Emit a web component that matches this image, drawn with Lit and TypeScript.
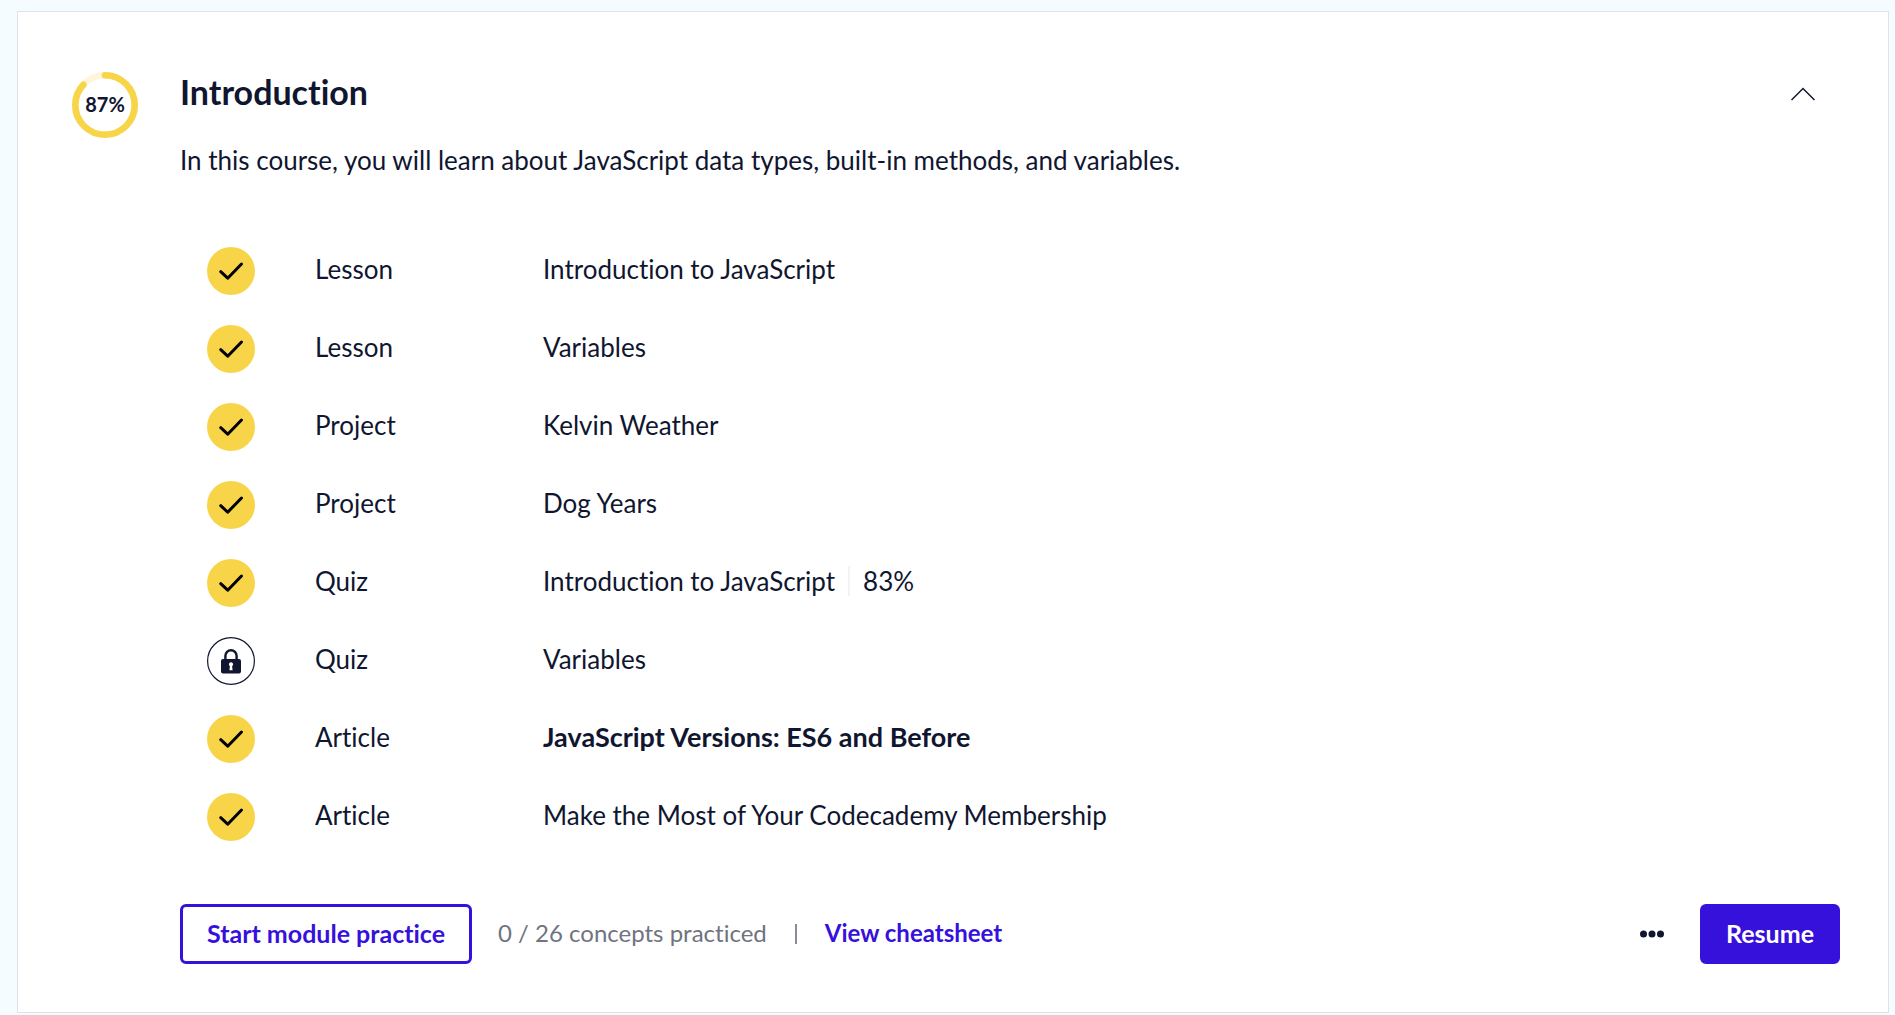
import { LitElement, html, svg, css, nothing } from "lit";
import { customElement, property, state } from "lit/decorators.js";

interface Item {
  kind: string;
  title: string;
  locked?: boolean;
  current?: boolean;
  score?: string;
}

const ITEMS: Item[] = [
  { kind: "Lesson", title: "Introduction to JavaScript" },
  { kind: "Lesson", title: "Variables" },
  { kind: "Project", title: "Kelvin Weather" },
  { kind: "Project", title: "Dog Years" },
  { kind: "Quiz", title: "Introduction to JavaScript", score: "83%" },
  { kind: "Quiz", title: "Variables", locked: true },
  { kind: "Article", title: "JavaScript Versions: ES6 and Before", current: true },
  { kind: "Article", title: "Make the Most of Your Codecademy Membership" },
];

@customElement("progress-ring")
export class ProgressRing extends LitElement {
  @property({ type: Number }) value = 0;

  static styles = css`
    :host {
      display: grid;
      width: 66px;
      height: 66px;
      place-items: center;
    }
    .ring,
    .label {
      grid-area: 1 / 1;
    }
    .label {
      padding-bottom: 2px;
      font-size: 20px;
      line-height: 24px;
      font-weight: 700;
    }
    .track,
    .bar {
      fill: none;
      stroke-width: 6.6;
    }
    .track {
      stroke: #fff5d9;
    }
    .bar {
      stroke: #f8d548;
      stroke-linecap: round;
    }
  `;

  render() {
    return html`
      <svg class="ring" width="66" height="66" viewBox="0 0 66 66" aria-hidden="true">
        <circle class="track" cx="33" cy="33" r="29.7"></circle>
        ${svg`<circle class="bar" cx="33" cy="33" r="29.7" pathLength="100"
          stroke-dasharray="${this.value} 100" transform="rotate(-90 33 33)"></circle>`}
      </svg>
      <span class="label">${this.value}%</span>
    `;
  }
}

@customElement("status-badge")
export class StatusBadge extends LitElement {
  @property({ type: Boolean }) locked = false;

  static styles = css`
    :host {
      display: block;
      width: 48px;
      height: 48px;
    }
    .icon {
      display: block;
    }
  `;

  render() {
    return this.locked
      ? html`<svg class="icon" width="48" height="48" viewBox="0 0 48 48" role="img" aria-label="Locked">
          <circle cx="24" cy="24" r="23.4" fill="#fff" stroke="#10162f" stroke-width="1.2"></circle>
          <path d="M18.4 24v-5.2a5.6 5.6 0 0 1 11.2 0V24" fill="none" stroke="#10162f" stroke-width="2.4"></path>
          <rect x="14" y="22" width="20" height="14.5" rx="2" fill="#10162f"></rect>
          <path d="M24 25.3a2.1 2.1 0 0 1 1.1 3.9l.5 4.1h-3.2l.5-4.1a2.1 2.1 0 0 1 1.1-3.9z" fill="#fff"></path>
        </svg>`
      : html`<svg class="icon" width="48" height="48" viewBox="0 0 48 48" role="img" aria-label="Completed">
          <circle cx="24" cy="24" r="24" fill="#f8d548"></circle>
          <path
            d="M13.700 24.700l7 6.500L34.500 17"
            fill="none"
            stroke="#000"
            stroke-width="3"
            stroke-linecap="round"
            stroke-linejoin="round"
          ></path>
        </svg>`;
  }
}

@customElement("app-root")
export class AppRoot extends LitElement {
  @state() private open = true;

  static styles = css`
    :host {
      display: block;
      box-sizing: border-box;
      min-height: 100vh;
      padding: 11px 6px 2px 17px;
      background: #f5fcff;
      color: #10162f;
      font-family: Lato, "Liberation Sans", sans-serif;
      font-size: 26px;
      line-height: 38px;
      font-variant-ligatures: none;
    }
    * {
      box-sizing: border-box;
    }
    .card {
      display: flex;
      gap: 42px;
      padding: 60px 48px 48px 54px;
      background: #fff;
      border: 1px solid #dfe3e8;
    }
    .main {
      flex: 1;
      min-width: 0;
    }
    .head {
      display: flex;
      justify-content: space-between;
      align-items: center;
      padding-right: 25px;
    }
    .heading {
      margin: 0;
      font-size: 34px;
      line-height: 40px;
      font-weight: 700;
    }
    button {
      font-family: inherit;
      font-variant-ligatures: inherit;
      cursor: pointer;
    }
    .toggle,
    .more {
      display: block;
      padding: 0;
      border: 0;
      background: none;
      color: inherit;
    }
    .icon {
      display: block;
    }
    .summary {
      margin: 29px 0 53px;
    }
    .list {
      margin: 0 0 48px;
      padding: 0 0 0 27px;
      list-style: none;
    }
    .item {
      display: grid;
      grid-template-columns: 48px 168px 1fr;
      column-gap: 60px;
      align-items: center;
      height: 78px;
    }
    .kind,
    .title {
      padding-bottom: 4px;
    }
    .title {
      display: flex;
      align-items: center;
      gap: 13px;
    }
    .link {
      color: inherit;
      text-decoration: none;
    }
    .current {
      font-size: 27px;
      font-weight: 700;
    }
    .score {
      padding-left: 13px;
      border-left: 2px solid #f3f3f5;
      line-height: 30px;
    }
    .actions {
      display: flex;
      align-items: center;
      font-size: 24px;
      line-height: 30px;
    }
    .practice,
    .resume {
      height: 60px;
      padding: 0 24px 2px;
      border: 3px solid #3611dc;
      border-radius: 6px;
      font-size: 25px;
      font-weight: 700;
    }
    .practice {
      background: #fff;
      color: #3611dc;
    }
    .resume {
      padding: 0 23px 2px;
      margin-left: 36px;
      background: #3611dc;
      color: #fff;
    }
    .count,
    .cheatsheet {
      padding-bottom: 2px;
    }
    .count {
      margin: 0 28px 0 26px;
      color: #707380;
    }
    .bar {
      width: 2px;
      height: 20px;
      background: #8b8c96;
    }
    .cheatsheet {
      margin: 0 auto 0 28px;
      color: #3611dc;
      font-weight: 700;
      text-decoration: none;
    }
  `;

  private toggle() {
    this.open = !this.open;
  }

  private renderItem(item: Item) {
    return html`
      <li class="item">
        <status-badge ?locked=${item.locked ?? false}></status-badge>
        <span class="kind">${item.kind}</span>
        <span class="title">
          <a class="link ${item.current ? "current" : ""}" href="#">${item.title}</a>
          ${item.score ? html`<span class="score">${item.score}</span>` : nothing}
        </span>
      </li>
    `;
  }

  render() {
    return html`
      <section class="card">
        <progress-ring .value=${87}></progress-ring>
        <div class="main">
          <div class="head">
            <h2 class="heading">Introduction</h2>
            <button class="toggle" aria-label="Toggle module" aria-expanded=${this.open} @click=${this.toggle}>
              <svg class="icon" width="24" height="24" viewBox="0 0 24 24" aria-hidden="true">
                <path d="M.5 20L12 8.500L23.500 20" fill="none" stroke="currentColor" stroke-width="1.500"></path>
              </svg>
            </button>
          </div>
          <p class="summary">
            In this course, you will learn about JavaScript data types, built-in methods, and variables.
          </p>
          ${this.open ? html`<ul class="list">${ITEMS.map((item) => this.renderItem(item))}</ul>` : nothing}
          <div class="actions">
            <button class="practice">Start module practice</button>
            <span class="count">0 / 26 concepts practiced</span>
            <span class="bar"></span>
            <a class="cheatsheet" href="#">View cheatsheet</a>
            <button class="more" aria-label="More options">
              <svg class="icon" width="24" height="24" viewBox="0 0 24 24" aria-hidden="true">
                <circle cx="3.500" cy="12" r="3.500" fill="currentColor"></circle>
                <circle cx="12" cy="12" r="3.500" fill="currentColor"></circle>
                <circle cx="20.500" cy="12" r="3.500" fill="currentColor"></circle>
              </svg>
            </button>
            <button class="resume">Resume</button>
          </div>
        </div>
      </section>
    `;
  }
}
